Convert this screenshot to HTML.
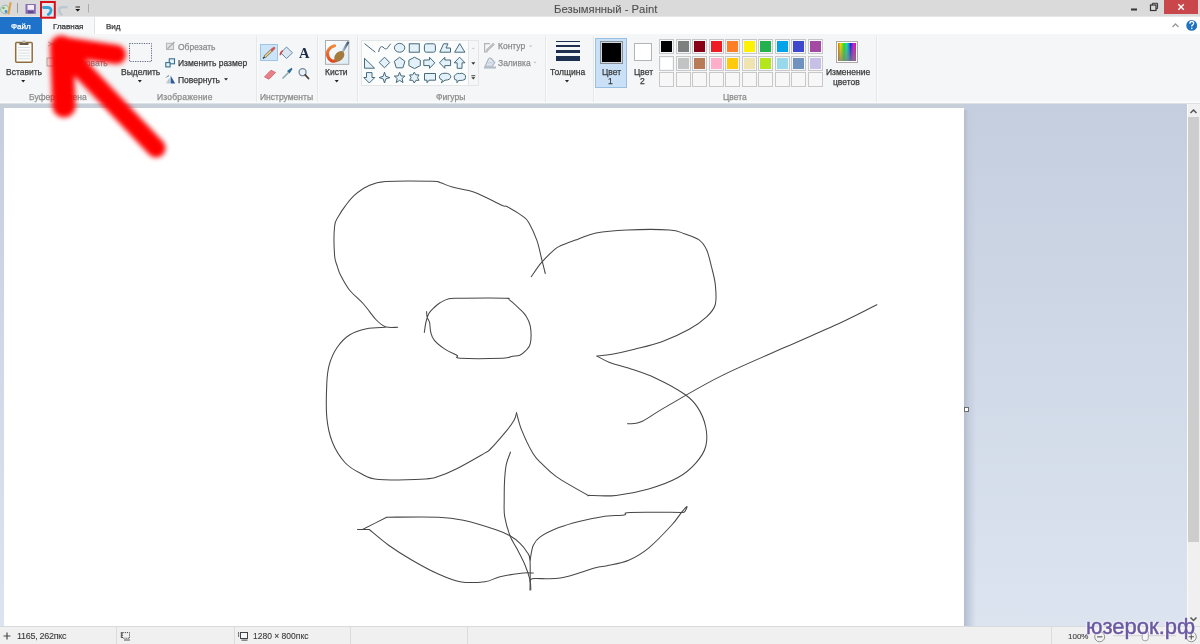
<!DOCTYPE html>
<html><head><meta charset="utf-8">
<style>
html,body{margin:0;padding:0;}
body{width:1200px;height:644px;overflow:hidden;position:relative;background:#fff;font-family:"Liberation Sans",sans-serif;}
.a{position:absolute;}
.t{position:absolute;white-space:nowrap;line-height:1;color:#3a3a3a;font-size:8.5px;-webkit-text-stroke:0.25px currentColor;will-change:transform;}
.g{color:#8c8c8c;}
.sep{position:absolute;top:36px;width:1px;height:66px;background:#e6e7e8;box-shadow:1px 0 0 #fbfbfb;}
.sw{position:absolute;width:13px;height:13px;border:1px solid #c8c8c8;}
.sw i{position:absolute;left:1px;top:1px;width:11px;height:11px;}
.sb{position:absolute;top:627px;width:1px;height:17px;background:#dcdcdc;}
</style></head><body>
<!-- title bar -->
<div class="a" style="left:0;top:0;width:1200px;height:16px;background:#dadada;"></div>
<div class="a" style="left:0;top:16px;width:1200px;height:1px;background:#e6e6e6;"></div>
<!-- tabs -->
<div class="a" style="left:0;top:17px;width:1200px;height:17px;background:#fff;"></div>
<div class="a" style="left:0;top:17px;width:42px;height:17px;background:#1f72c9;"></div>
<div class="a" style="left:42px;top:17px;width:52px;height:17px;background:#f7f8f9;border-right:1px solid #e2e3e4;"></div>
<!-- ribbon -->
<div class="a" style="left:0;top:34px;width:1200px;height:69px;background:#f5f6f7;"></div>
<div class="a" style="left:0;top:101px;width:1200px;height:2px;background:#f9fafa;"></div><div class="a" style="left:0;top:103px;width:1200px;height:1px;background:#dde2e8;"></div>
<!-- canvas area -->
<div class="a" style="left:0;top:104px;width:1187px;height:522px;background:linear-gradient(#c5cedf,#dce4f0);"></div>
<div class="a" style="left:0;top:104px;width:964px;height:4px;background:#c6ced8;"></div>
<div class="a" style="left:964px;top:110px;width:12px;height:516px;background:linear-gradient(90deg,#b3bdcc,#c4cddd 40%,rgba(0,0,0,0));"></div>
<div class="a" style="left:4px;top:108px;width:960px;height:518px;background:#fff;"></div>
<div class="a" style="left:964px;top:407px;width:3px;height:3px;border:1px solid #6d6d6d;background:#fff;"></div>
<!-- scrollbar -->
<div class="a" style="left:1187px;top:104px;width:13px;height:522px;background:#f0f0f0;border-left:1px solid #fafafa;box-sizing:border-box;"></div>
<div class="a" style="left:1188px;top:117px;width:11px;height:425px;background:#cdcdcd;"></div>
<!-- status bar -->
<div class="a" style="left:0;top:626px;width:1200px;height:18px;background:#f0f0f0;border-top:1px solid #dadada;box-sizing:border-box;"></div>
<div class="sb" style="left:116px"></div>
<div class="sb" style="left:234px"></div>
<div class="sb" style="left:350px"></div>
<div class="sb" style="left:467px"></div>
<div class="sb" style="left:1051px"></div>

<!-- title text -->
<div class="t" style="left:554px;top:4px;font-size:11.3px;color:#505050;-webkit-text-stroke:0.1px #505050;">Безымянный - Paint</div>
<!-- close -->
<div class="a" style="left:1164px;top:0;width:34px;height:14px;background:#c9464a;"></div>

<!-- tab text -->
<div class="t" style="left:11px;top:22.5px;font-size:8px;color:#fff;">Файл</div>
<div class="t" style="left:52.5px;top:22.5px;font-size:8px;">Главная</div>
<div class="t" style="left:105.5px;top:22.5px;font-size:8px;">Вид</div>

<!-- quick access toolbar -->
<svg class="a" style="left:0;top:0" width="100" height="20" viewBox="0 0 100 20">
  <circle cx="5" cy="9.5" r="4.3" fill="#cfe6d0" stroke="#8fa8b0" stroke-width="0.8"/>
  <circle cx="3.5" cy="8" r="1.1" fill="#5aa04a"/><circle cx="6" cy="11.5" r="1.4" fill="#4a90d0"/>
  <path d="M8.5,13.5 L10.5,3" stroke="#e0a050" stroke-width="2.2" stroke-linecap="round"/>
  <rect x="17" y="3" width="1" height="10" fill="#9a9a9a"/>
  <rect x="25.5" y="4" width="10.3" height="9.8" fill="#8a6cb4"/>
  <rect x="27.5" y="5" width="6.5" height="4.8" fill="#f4eefa"/>
  <rect x="28" y="11" width="5.5" height="2.2" fill="#5e4a86"/>
  <rect x="41" y="2" width="13.8" height="15.7" fill="#e4e8ec" stroke="#d3101c" stroke-width="2"/>
  <path d="M43.5,7.5 L48,7.5 Q51.3,7.8 51,10.8 Q50.6,13.2 48.3,14.5" fill="none" stroke="#35a2d8" stroke-width="2.8" stroke-linecap="round"/>
  <path d="M66.5,7.3 L61.7,7.3 Q59,7.6 59.2,10.5 Q59.5,13 61.5,14.6" fill="none" stroke="#bcc8d2" stroke-width="2.4" stroke-linecap="round"/>
  <rect x="75.5" y="6.5" width="4.5" height="1" fill="#222"/>
  <path d="M75.3,9 L80.2,9 L77.75,11.6 Z" fill="#111"/>
  <rect x="88" y="4" width="1" height="8.5" fill="#aaa"/>
</svg>
<!-- window controls -->
<svg class="a" style="left:1120px;top:0" width="80" height="34" viewBox="1120 0 80 34">
  <rect x="1131" y="8.5" width="6" height="2" fill="#333"/>
  <rect x="1150.5" y="5" width="5.5" height="5.5" fill="none" stroke="#333" stroke-width="1.2"/>
  <path d="M1152.3,5 L1152.3,3.3 L1157.6,3.3 L1157.6,8.6 L1156,8.6" fill="none" stroke="#333" stroke-width="1"/>
  <rect x="1164" y="0" width="34" height="14" fill="#c9474a"/>
  <path d="M1178.3,4.3 L1183.8,9.8 M1183.8,4.3 L1178.3,9.8" stroke="#fff" stroke-width="1.4"/>
  <path d="M1172.5,27 L1175.5,24 L1178.5,27" fill="none" stroke="#9a9a9a" stroke-width="1.3"/>
  <circle cx="1191.7" cy="25.4" r="5.4" fill="#1f73c0"/>
  <path d="M1189.8,23.6 Q1189.9,21.4 1191.8,21.4 Q1193.8,21.5 1193.7,23.3 Q1193.6,24.5 1192.4,25.1 Q1191.7,25.6 1191.7,26.6" fill="none" stroke="#fff" stroke-width="1.3"/>
  <rect x="1191" y="27.7" width="1.4" height="1.4" fill="#fff"/>
</svg>
<!-- clipboard -->
<svg class="a" style="left:0;top:34px" width="120" height="70" viewBox="0 34 120 70">
  <rect x="15.7" y="42.6" width="16.5" height="19.6" rx="1" fill="#fdfcf8" stroke="#8f6f40" stroke-width="1.5"/>
  <path d="M18,47.5 H30 M18,50.3 H30 M18,53.1 H30 M18,55.9 H30 M18,58.7 H30" stroke="#c9d9e6" stroke-width="0.8"/>
  <rect x="19.5" y="43" width="9" height="2" fill="#6a5a48"/>
  <rect x="22.5" y="40.5" width="3" height="2.5" fill="#b8b8b8"/>
  <path d="M21.2,80 L25.2,80 L23.2,82.4 Z" fill="#222"/>
  <!-- cut / copy (under arrow) -->
  <path d="M48,46 L56,42 M48,42 L56,46" stroke="#aaa" stroke-width="1"/>
  <rect x="47" y="58" width="7" height="8" fill="none" stroke="#aaa" stroke-width="1"/>
</svg>
<!-- image group -->
<svg class="a" style="left:110px;top:34px" width="150" height="70" viewBox="110 34 150 70">
  <rect x="129.5" y="43.5" width="22" height="18" fill="none" stroke="#5a6a80" stroke-width="1" stroke-dasharray="1.2,1.2"/>
  <path d="M137.8,80 L141.8,80 L139.8,82.4 Z" fill="#222"/>
  <!-- crop -->
  <rect x="166.5" y="43.3" width="7" height="6.2" fill="#e2e5e8" stroke="#b4b8bc" stroke-width="1.1"/>
  <path d="M167.5,48.8 L174.5,42" stroke="#a8acb0" stroke-width="1.2"/>
  <!-- resize -->
  <rect x="169.3" y="58.8" width="5.2" height="5" fill="#e6f1f8" stroke="#3a6e90" stroke-width="1.1"/>
  <rect x="165.8" y="62.6" width="4.3" height="4.3" fill="#e6f1f8" stroke="#3a6e90" stroke-width="1.1"/>
  <!-- rotate -->
  <defs><linearGradient id="rg" x1="0" y1="0" x2="1" y2="0"><stop offset="0" stop-color="#f4f4f4"/><stop offset="1" stop-color="#a8b4c0"/></linearGradient></defs>
  <path d="M170.6,75.5 L170.6,83.4 L175.2,83.4 Z" fill="#2f5f9a"/>
  <path d="M169.6,78 L169.6,83.4 L164.8,83.4 Z" fill="url(#rg)"/>
  <path d="M166.3,77.5 L167.5,76.2 M168.2,76.5 L168.4,75.3" stroke="#3a5a7a" stroke-width="0.9"/>
  <path d="M224,78.2 L228,78.2 L226,80.6 Z" fill="#222"/>
</svg>
<!-- tools -->
<svg class="a" style="left:255px;top:34px;will-change:transform" width="100" height="70" viewBox="255 34 100 70">
  <rect x="260.5" y="44.5" width="17" height="16" fill="#cce4f7" stroke="#a0c4e4" stroke-width="1"/>
  <path d="M264.5,57 L272.5,49.5" stroke="#7a6a4a" stroke-width="2.8"/>
  <path d="M264.5,57 L272.5,49.5" stroke="#ecd898" stroke-width="1.5"/>
  <path d="M272,50 L274,48.1" stroke="#d05858" stroke-width="2.6" stroke-linecap="round"/>
  <path d="M263,58.5 L264.8,56.7" stroke="#333" stroke-width="1.4"/>
  <!-- fill -->
  <path d="M286.5,47 L292.5,52.8 L286.5,58.5 L280.8,52.8 Z" fill="#dbe8f2" stroke="#5f8aa8" stroke-width="1"/>
  <path d="M283,50.8 Q280.5,51.5 280.3,55.3" fill="none" stroke="#d05050" stroke-width="1.6"/>
  <!-- A -->
  <text x="299" y="58.4" font-family="Liberation Serif" font-weight="bold" font-size="14.5" fill="#1e2b48">A</text>
  <!-- eraser -->
  <path d="M264.5,77 L271,70.2 L275.5,72.5 L269,79.2 Z" fill="#e88088" stroke="#d06068" stroke-width="0.8"/>
  <!-- picker -->
  <path d="M282.5,78.5 L288.5,72.5" stroke="#8aa0a8" stroke-width="1.4"/>
  <path d="M287,71 L291.5,67.8 L292.5,69 L289.5,73.5 Z" fill="#2a6f98"/>
  <!-- magnifier -->
  <circle cx="302.6" cy="72.2" r="3.5" fill="#e6f1f8" stroke="#7a8a98" stroke-width="1.3"/>
  <path d="M305.2,74.8 L308.5,78.5" stroke="#4a4038" stroke-width="1.8" stroke-linecap="round"/>
  <!-- brushes -->
  <defs><linearGradient id="bg1" x1="0" y1="0" x2="1" y2="1"><stop offset="0" stop-color="#fff"/><stop offset="1" stop-color="#dcecf6"/></linearGradient></defs>
  <rect x="325.5" y="40.5" width="23.3" height="23.8" fill="url(#bg1)" stroke="#a9adb0" stroke-width="1"/>
  <defs><linearGradient id="og" x1="0" y1="0" x2="0" y2="1"><stop offset="0" stop-color="#f08a40"/><stop offset="1" stop-color="#e04a20"/></linearGradient>
  <linearGradient id="hg" x1="0" y1="0" x2="1" y2="0"><stop offset="0" stop-color="#c8d8e8"/><stop offset="1" stop-color="#3a5070"/></linearGradient></defs>
  <path d="M334.5,45.8 Q329.5,47 327.6,52 Q326.8,57.5 331,60.5 Q334.5,62.3 338,59.5" fill="none" stroke="url(#og)" stroke-width="3.2" stroke-linecap="round"/>
  <path d="M341.5,53.5 L348.3,41.8" stroke="url(#hg)" stroke-width="2.4"/>
  <ellipse cx="339.3" cy="56.3" rx="6" ry="4.2" transform="rotate(-48 339.3 56.3)" fill="#a57a3e"/>
  <path d="M334.7,80 L338.7,80 L336.7,82.4 Z" fill="#222"/>
</svg>
<!-- shapes -->
<div class="a" style="left:361px;top:40px;width:108px;height:46px;background:#fbfcfc;border:1px solid #e3e5e7;box-sizing:border-box;"></div>
<div class="a" style="left:469px;top:40px;width:10px;height:46px;border:1px solid #e3e5e7;border-left:none;box-sizing:border-box;"></div>
<svg class="a" style="left:355px;top:34px" width="125" height="60" viewBox="355 34 125 60">
<g fill="#e3f2fa" stroke="#48697a" stroke-width="1" stroke-linejoin="miter">
  <path d="M364.5,43.6 L375.3,52.2" fill="none"/>
  <path d="M378.6,52 Q380,45 383,47 Q385.5,50.5 388,47.5 Q389.5,45 390.7,43.8" fill="none"/>
  <ellipse cx="399.6" cy="47.8" rx="5.2" ry="4.4"/>
  <rect x="409.3" y="43.8" width="10" height="8.4"/>
  <rect x="424.4" y="43.8" width="11" height="8.4" rx="2"/>
  <path d="M439.8,52.2 L443.6,43.8 L448,43.8 L446,48 L450.5,48 L450.5,52.2 Z"/>
  <path d="M454.6,52.2 L459.7,43.6 L464.9,52.2 Z"/>
  <path d="M364.5,58.3 L364.5,68.2 L374.6,68.2 Z"/>
  <path d="M384.5,57.2 L389.7,62.5 L384.5,67.8 L379.2,62.5 Z"/>
  <path d="M399.6,57.3 L404.9,61.3 L402.9,67.8 L396.3,67.8 L394.3,61.3 Z"/>
  <path d="M414.5,57.2 L420.3,60.2 L420.3,65.6 L414.5,68.6 L408.9,65.6 L408.9,60.2 Z"/>
  <path d="M423.8,60 L429.5,60 L429.5,57.3 L434.8,62.8 L429.5,68.3 L429.5,65.6 L423.8,65.6 Z"/>
  <path d="M450.6,60 L444.8,60 L444.8,57.3 L439.5,62.8 L444.8,68.3 L444.8,65.6 L450.6,65.6 Z"/>
  <path d="M457.2,68.3 L457.2,62.8 L454.2,62.8 L459.6,57.2 L465,62.8 L462,62.8 L462,68.3 Z"/>
  <path d="M366.5,72.6 L372,72.6 L372,77.5 L374.8,77.5 L369.3,83 L363.8,77.5 L366.5,77.5 Z"/>
  <path d="M384.5,72.2 L385.8,76.3 L389.9,77.6 L385.8,78.9 L384.5,83 L383.2,78.9 L379.1,77.6 L383.2,76.3 Z"/>
  <path d="M399.6,72.3 L401,75.9 L404.9,76.1 L402,78.6 L403,82.5 L399.6,80.4 L396.2,82.5 L397.2,78.6 L394.3,76.1 L398.2,75.9 Z"/>
  <path d="M414.3,72.2 L415.9,74.9 L419,74.9 L417.5,77.6 L419,80.3 L415.9,80.3 L414.3,83 L412.7,80.3 L409.6,80.3 L411.1,77.6 L409.6,74.9 L412.7,74.9 Z"/>
  <path d="M424.5,73.5 L435.5,73.5 L435.5,80.2 L429,80.2 L427,82.8 L427,80.2 L424.5,80.2 Z"/>
  <path d="M442.5,80.3 Q439,79 439.3,76.7 Q439.8,73.3 445,73.2 Q450.7,73.3 450.8,76.8 Q450.5,80 445,80.2 L441.3,82.8 Z"/>
  <path d="M457,80.3 Q453.8,79.8 454.3,77.8 Q453.5,75.5 455.8,74.5 Q457,72.8 459.6,73.6 Q462,72.5 463.8,74.2 Q466.3,75 465.5,77.3 Q466,80 462.5,80.3 L458.5,80.5 L457,82.8 Z"/>
</g>
  <path d="M471.8,49 L474.8,49 L473.3,47.4 Z" fill="#c8c8c8"/>
  <path d="M471.3,62.3 L475.3,62.3 L473.3,64.7 Z" fill="#333"/>
  <rect x="471.3" y="75.3" width="4" height="0.9" fill="#333"/>
  <path d="M471.3,77.2 L475.3,77.2 L473.3,79.6 Z" fill="#333"/>
</svg>
<!-- outline / fill -->
<svg class="a" style="left:478px;top:34px" width="70" height="40" viewBox="478 34 70 40">
  <path d="M490,43.6 H484.6 V51.8 H487.5" fill="none" stroke="#b4b4b4" stroke-width="1.2"/>
  <path d="M486.3,51 L494,43.6" stroke="#a9a9a9" stroke-width="2.2"/>
  <path d="M486.3,51 L494,43.6" stroke="#e8e8e8" stroke-width="0.7"/>
  <path d="M529.2,45.6 L532.4,45.6 L530.8,47.2 Z" fill="#c2c2c2"/>
  <path d="M485.2,66.3 L488.3,59.3 Q489.6,57 491.4,58.6 L494.8,62.6 L492.2,66.3 Z" fill="#dde4ec" stroke="#a6b2c0" stroke-width="1.1"/><path d="M488,63.5 Q490,61.8 492.5,63" fill="none" stroke="#b8c4d0" stroke-width="0.8"/>
  <rect x="484" y="66.4" width="12" height="2.2" fill="#b4bec8"/>
  <path d="M533.4,61.8 L536.6,61.8 L535,63.4 Z" fill="#c2c2c2"/>
</svg>
<!-- thickness -->
<div class="a" style="left:556px;top:41px;width:24px;height:1px;background:#1e3050;"></div>
<div class="a" style="left:556px;top:45px;width:24px;height:2px;background:#1e3050;"></div>
<div class="a" style="left:556px;top:50px;width:24px;height:3px;background:#1e3050;"></div>
<div class="a" style="left:556px;top:56px;width:24px;height:5px;background:#1e3050;"></div>
<svg class="a" style="left:560px;top:78px" width="14" height="8" viewBox="560 78 14 8"><path d="M565,80 L569,80 L567,82.4 Z" fill="#222"/></svg>
<!-- separators -->
<div class="sep" style="left:256px"></div>
<div class="sep" style="left:317px"></div>
<div class="sep" style="left:357px"></div>
<div class="sep" style="left:545px"></div>
<div class="sep" style="left:593px"></div>
<div class="sep" style="left:876px"></div>
<!-- color 1 / color 2 -->
<div class="a" style="left:595px;top:38px;width:32px;height:50px;background:#c9e0f7;border:1px solid #99bfe3;box-sizing:border-box;"></div>
<div class="a" style="left:600px;top:40.5px;width:23px;height:23px;background:#000;border:1px solid #8a9098;box-shadow:inset 0 0 0 1px #d0d6de;box-sizing:border-box;"></div>
<div class="a" style="left:634px;top:43px;width:18px;height:18px;background:#fff;border:1px solid #b4b4b4;box-sizing:border-box;"></div>
<!-- edit colors -->
<div class="a" style="left:836px;top:41px;width:22px;height:22px;border:1px solid #b0a8a8;box-sizing:border-box;background:#fff;"></div>
<div class="a" style="left:838px;top:43px;width:18px;height:18px;background:linear-gradient(rgba(128,128,128,0),rgba(128,128,128,0.75)),linear-gradient(90deg,#e07000,#f0e000 15%,#20e020 33%,#20e0a0 48%,#1080f0 62%,#2020c0 70%,#c020e0 85%,#e01080);"></div>
<!-- palette -->
<div class="sw" style="left:659.3px;top:39.4px;"><i style="background:#000000"></i></div>
<div class="sw" style="left:675.8px;top:39.4px;"><i style="background:#7f7f7f"></i></div>
<div class="sw" style="left:692.3px;top:39.4px;"><i style="background:#880015"></i></div>
<div class="sw" style="left:708.8px;top:39.4px;"><i style="background:#ed1c24"></i></div>
<div class="sw" style="left:725.3px;top:39.4px;"><i style="background:#ff7f27"></i></div>
<div class="sw" style="left:741.8px;top:39.4px;"><i style="background:#fff200"></i></div>
<div class="sw" style="left:758.3px;top:39.4px;"><i style="background:#22b14c"></i></div>
<div class="sw" style="left:774.8px;top:39.4px;"><i style="background:#00a2e8"></i></div>
<div class="sw" style="left:791.3px;top:39.4px;"><i style="background:#3f48cc"></i></div>
<div class="sw" style="left:807.8px;top:39.4px;"><i style="background:#a349a4"></i></div>
<div class="sw" style="left:659.3px;top:55.8px;"><i style="background:#ffffff"></i></div>
<div class="sw" style="left:675.8px;top:55.8px;"><i style="background:#c3c3c3"></i></div>
<div class="sw" style="left:692.3px;top:55.8px;"><i style="background:#b97a57"></i></div>
<div class="sw" style="left:708.8px;top:55.8px;"><i style="background:#ffaec9"></i></div>
<div class="sw" style="left:725.3px;top:55.8px;"><i style="background:#ffc90e"></i></div>
<div class="sw" style="left:741.8px;top:55.8px;"><i style="background:#efe4b0"></i></div>
<div class="sw" style="left:758.3px;top:55.8px;"><i style="background:#b5e61d"></i></div>
<div class="sw" style="left:774.8px;top:55.8px;"><i style="background:#99d9ea"></i></div>
<div class="sw" style="left:791.3px;top:55.8px;"><i style="background:#7092be"></i></div>
<div class="sw" style="left:807.8px;top:55.8px;"><i style="background:#c8bfe7"></i></div>
<div class="sw" style="left:659.3px;top:72.2px;background:#f7f7f7;"></div>
<div class="sw" style="left:675.8px;top:72.2px;background:#f7f7f7;"></div>
<div class="sw" style="left:692.3px;top:72.2px;background:#f7f7f7;"></div>
<div class="sw" style="left:708.8px;top:72.2px;background:#f7f7f7;"></div>
<div class="sw" style="left:725.3px;top:72.2px;background:#f7f7f7;"></div>
<div class="sw" style="left:741.8px;top:72.2px;background:#f7f7f7;"></div>
<div class="sw" style="left:758.3px;top:72.2px;background:#f7f7f7;"></div>
<div class="sw" style="left:774.8px;top:72.2px;background:#f7f7f7;"></div>
<div class="sw" style="left:791.3px;top:72.2px;background:#f7f7f7;"></div>
<div class="sw" style="left:807.8px;top:72.2px;background:#f7f7f7;"></div>
<!-- ribbon text -->
<div class="t" style="left:6px;top:68px;">Вставить</div>
<div class="t g" style="left:29px;top:93px;">Буфер обмена</div>
<div class="t g" style="left:62px;top:43px;">Вырезать</div>
<div class="t g" style="left:62px;top:59px;">Копировать</div>
<div class="t" style="left:121px;top:68px;">Выделить</div>
<div class="t g" style="left:178px;top:43px;">Обрезать</div>
<div class="t" style="left:178px;top:59px;">Изменить размер</div>
<div class="t" style="left:178px;top:76px;">Повернуть</div>
<div class="t g" style="left:157px;top:93px;letter-spacing:0.2px;">Изображение</div>
<div class="t g" style="left:260px;top:93px;">Инструменты</div>
<div class="t" style="left:325px;top:68px;">Кисти</div>
<div class="t g" style="left:436px;top:93px;">Фигуры</div>
<div class="t g" style="left:498px;top:42px;">Контур</div>
<div class="t g" style="left:498px;top:59px;">Заливка</div>
<div class="t" style="left:550px;top:68px;">Толщина</div>
<div class="t" style="left:602px;top:68px;">Цвет</div>
<div class="t" style="left:608px;top:77px;">1</div>
<div class="t" style="left:634px;top:68px;">Цвет</div>
<div class="t" style="left:640px;top:77px;">2</div>
<div class="t g" style="left:723px;top:93px;">Цвета</div>
<div class="t" style="left:826px;top:68px;">Изменение</div>
<div class="t" style="left:833px;top:78px;">цветов</div>


<!-- flower drawing -->
<svg class="a" style="left:0;top:0" width="1200" height="644" viewBox="0 0 1200 644">
<g fill="none" stroke="#474747" stroke-width="1.05" stroke-linejoin="round" stroke-linecap="round">
<path d="M397.7,327.3 C395.6,327.2 388.9,328.0 385.3,326.7 C381.7,325.4 379.5,323.3 375.9,319.5 C372.3,315.7 367.9,308.9 363.5,304.0 C359.1,299.1 353.3,294.8 349.5,290.0 C345.7,285.2 342.5,278.9 340.5,275.0 C338.5,271.1 338.4,269.8 337.4,266.6 C336.4,263.4 335.1,262.4 334.6,255.7 C334.1,249.0 333.9,232.9 334.6,226.2 C335.3,219.5 337.2,218.8 339.0,215.4 C340.8,212.1 342.6,209.5 345.2,206.1 C347.8,202.7 350.8,198.5 354.5,195.2 C358.2,191.9 362.5,188.5 367.7,186.2 C372.9,183.9 374.9,182.3 385.6,181.5 C396.3,180.7 422.9,181.0 432.1,181.2 C441.3,181.4 437.3,181.8 440.7,182.8 C444.1,183.8 446.6,185.5 452.3,187.1 C458.0,188.7 466.8,189.4 475.0,192.4 C483.2,195.4 496.4,202.8 501.8,205.2 C507.2,207.6 503.7,204.8 507.3,206.7 C510.9,208.6 520.0,214.1 523.6,216.8 C527.2,219.5 526.8,219.1 529.0,223.0 C531.2,226.9 534.7,234.3 536.8,240.1 C538.9,245.9 540.0,252.4 541.4,258.0 C542.8,263.6 544.6,270.9 545.3,273.5"/>
<path d="M531.3,276.6 C533.0,274.3 537.6,267.0 541.4,262.6 C545.2,258.2 550.8,252.9 553.9,250.2 C557.0,247.4 556.1,247.9 560.0,246.1 C563.9,244.3 571.4,241.6 577.4,239.4 C583.4,237.2 587.7,234.5 596.0,232.9 C604.3,231.3 614.9,230.4 627.1,229.9 C639.3,229.4 659.8,229.3 669.3,229.9 C678.8,230.5 679.2,232.0 684.2,233.7 C689.2,235.4 695.4,237.2 699.1,239.9 C702.8,242.6 704.5,245.2 706.6,249.8 C708.7,254.4 710.2,261.4 711.6,267.2 C713.0,273.0 714.7,278.4 715.3,284.6 C715.9,290.8 716.8,299.1 715.3,304.5 C713.8,309.9 711.0,312.8 706.6,316.9 C702.2,321.0 696.7,325.2 689.2,329.3 C681.8,333.4 671.0,338.4 661.9,341.7 C652.8,345.0 642.8,347.1 634.5,349.2 C626.2,351.3 618.5,353.0 612.2,354.2 C606.0,355.4 599.5,355.8 597.0,356.1"/>
<path d="M597.0,356.1 C599.1,357.2 604.2,360.4 609.6,362.4 C615.0,364.4 621.5,365.7 629.1,368.3 C636.7,370.9 646.0,373.7 655.2,378.0 C664.5,382.3 677.5,389.4 684.6,394.3 C691.7,399.2 694.1,401.9 697.6,407.4 C701.1,412.8 704.4,420.5 705.7,427.0 C707.1,433.5 707.3,440.5 705.7,446.5 C704.1,452.5 700.6,457.6 696.0,462.8 C691.4,468.0 685.9,473.1 678.0,477.5 C670.1,481.9 659.0,485.9 648.7,488.9 C638.4,491.9 625.9,494.3 616.1,495.4 C606.3,496.5 595.1,495.6 590.0,495.4 C584.9,495.2 591.3,497.1 585.7,494.0 C580.1,490.9 564.0,482.0 556.6,476.9 C549.2,471.8 545.3,467.2 541.3,463.2 C537.3,459.2 536.0,458.6 532.7,453.0 C529.4,447.4 524.3,436.6 521.6,429.9 C518.9,423.2 517.4,415.6 516.5,412.8"/>
<path d="M516.5,412.8 C516.1,414.1 516.0,416.9 513.9,420.5 C511.8,424.1 507.7,429.4 503.7,434.2 C499.7,439.0 493.2,446.4 490.0,449.5 C486.8,452.6 490.2,449.9 484.7,453.1 C479.1,456.3 464.5,464.8 456.7,468.7 C448.9,472.6 443.3,474.8 438.1,476.5 C432.9,478.2 435.6,478.4 425.7,478.9 C415.8,479.4 389.9,480.5 379.0,479.6 C368.1,478.7 366.1,476.2 360.4,473.3 C354.7,470.4 349.6,467.7 344.9,462.5 C340.2,457.3 335.4,449.8 332.4,442.3 C329.4,434.8 327.7,427.2 326.8,417.4 C325.9,407.5 326.4,392.0 326.8,383.2 C327.2,374.4 327.6,370.6 329.3,364.6 C331.0,358.7 333.7,352.4 337.1,347.5 C340.5,342.6 344.6,338.1 349.5,335.0 C354.4,331.9 360.6,330.1 366.6,328.8 C372.6,327.5 382.2,327.6 385.3,327.3"/>
<path d="M424.3,332.5 C424.6,330.7 425.3,324.7 426.1,321.5 C426.9,318.3 427.6,315.6 429.0,313.3 C430.4,311.0 432.4,309.2 434.2,307.5 C436.0,305.8 437.6,304.3 440.0,302.8 C442.4,301.3 445.2,299.5 448.8,298.7 C452.4,297.9 452.3,298.3 461.6,298.2 C470.9,298.1 496.7,297.9 504.7,298.2 C512.7,298.5 507.1,298.2 509.4,299.9 C511.7,301.5 516.0,305.5 518.7,308.1 C521.4,310.7 523.8,312.6 525.7,315.6 C527.6,318.6 529.5,321.4 530.3,326.1 C531.1,330.8 531.1,339.5 530.3,343.6 C529.5,347.7 527.5,348.7 525.7,350.6 C524.0,352.5 522.1,354.2 519.8,355.2 C517.5,356.2 514.6,355.9 511.7,356.4 C508.8,356.9 510.9,357.9 502.4,358.2 C493.8,358.5 468.0,358.7 460.4,358.2 C452.8,357.7 459.4,356.7 456.9,355.2 C454.4,353.7 449.1,351.9 445.3,349.4 C441.5,346.9 436.6,343.0 434.2,340.1 C431.8,337.2 431.5,334.9 430.7,332.0 C429.9,329.1 430.2,325.0 429.6,322.6 C429.0,320.2 427.7,319.2 427.2,317.4 C426.7,315.6 426.7,312.6 426.6,311.6"/>
<path d="M627.5,423.7 C629.7,423.4 634.2,424.8 640.5,422.1 C646.8,419.4 651.7,415.0 665.0,407.4 C678.3,399.8 700.3,386.4 720.4,376.4 C740.5,366.3 765.0,356.3 785.6,347.1 C806.2,337.9 829.1,328.1 844.3,321.0 C859.5,313.9 871.5,307.4 876.9,304.7"/>
<path d="M510.5,452.1 C509.8,454.2 507.2,459.9 506.2,464.9 C505.2,469.9 504.8,476.1 504.5,482.0 C504.2,487.9 504.2,494.2 504.2,500.0 C504.2,505.8 503.7,510.7 504.7,516.7 C505.7,522.7 508.0,530.5 510.0,535.8 C512.0,541.1 514.2,543.4 516.7,548.3 C519.2,553.2 522.8,559.7 525.0,565.0 C527.2,570.3 529.0,575.8 530.0,580.0 C531.0,584.2 530.7,588.3 530.8,590.0"/>
<path d="M357.5,529.5 C359.4,529.5 367.2,529.5 369.2,529.5"/>
<path d="M369.2,529.5 C372.4,532.1 381.2,539.9 388.3,545.0 C395.4,550.1 403.6,555.3 411.7,560.0 C419.8,564.7 428.6,569.7 436.7,573.3 C444.8,576.9 451.9,580.3 460.0,581.7 C468.1,583.1 478.3,582.5 485.0,581.7 C491.7,580.9 493.6,578.2 500.0,576.7 C506.4,575.2 517.8,573.6 523.3,573.0 C528.8,572.4 531.6,573.0 533.3,573.0"/>
<path d="M362.5,529.5 C366.5,527.5 382.7,519.2 386.7,517.2"/>
<path d="M386.7,517.2 C395.3,517.2 425.5,516.7 438.3,517.2 C451.1,517.7 453.6,518.2 463.3,520.3 C473.0,522.4 488.9,527.4 496.7,530.0 C504.5,532.6 506.1,533.6 510.0,535.8 C513.9,538.0 517.2,540.6 520.0,543.3 C522.8,545.9 525.0,548.9 526.7,551.7 C528.4,554.5 529.5,553.6 530.0,560.0 C530.5,566.4 530.0,585.0 530.0,590.0"/>
<path d="M530.0,581.0 C530.7,580.6 528.9,579.0 534.0,578.5 C539.1,578.0 550.3,579.9 560.4,578.1 C570.5,576.4 586.7,570.1 594.5,568.0 C602.3,565.9 601.3,567.0 607.0,565.7 C612.7,564.4 621.7,563.2 628.7,560.2 C635.7,557.2 641.6,553.8 648.9,547.8 C656.1,541.8 666.8,530.4 672.2,524.5 C677.6,518.6 679.0,515.4 681.5,512.4 C684.0,509.4 686.5,506.7 687.0,506.6 C687.5,506.5 685.5,510.8 684.6,511.8 C683.7,512.8 682.0,512.3 681.5,512.4"/>
<path d="M681.5,512.4 C673.0,512.4 639.8,512.0 630.2,512.4 C620.6,512.8 628.6,514.2 624.0,514.9 C619.4,515.6 609.8,515.6 602.3,516.7 C594.8,517.8 586.2,519.6 579.0,521.4 C571.8,523.2 565.3,525.0 558.8,527.6 C552.3,530.2 544.5,533.9 540.2,536.9 C535.9,539.9 534.9,541.6 533.2,545.5 C531.5,549.4 530.6,557.8 530.1,560.2"/>
</g>
</svg>
<!-- status text -->
<div class="t" style="left:17px;top:632px;font-size:9px;letter-spacing:-0.3px;-webkit-text-stroke:0.1px #3a3a3a;">1165, 262пкс</div>
<div class="t" style="left:252.5px;top:632px;font-size:8.5px;-webkit-text-stroke:0.1px #3a3a3a;">1280 × 800пкс</div>
<div class="t" style="left:1068px;top:632.5px;font-size:8px;-webkit-text-stroke:0.1px #3a3a3a;">100%</div>


<!-- scrollbar arrows -->
<svg class="a" style="left:1187px;top:104px" width="13" height="522" viewBox="1187 104 13 522">
  <path d="M1190.5,113 L1193.5,110 L1196.5,113" fill="none" stroke="#555" stroke-width="1.5"/>
  <path d="M1190.5,617.5 L1193.5,620.5 L1196.5,617.5" fill="none" stroke="#555" stroke-width="1.5"/>
</svg>
<!-- status icons -->
<svg class="a" style="left:0;top:626px" width="1200" height="18" viewBox="0 626 1200 18">
  <path d="M3.5,636 H10.5 M7,632.5 V639.5" stroke="#4a4a4a" stroke-width="1.2"/>
  <rect x="122.5" y="632.6" width="7" height="5.6" fill="none" stroke="#333" stroke-width="0.9" stroke-dasharray="1.2,1"/>
  <rect x="120.8" y="632" width="1.2" height="6" fill="#666"/>
  <rect x="124" y="639.5" width="6" height="1" fill="#555"/>
  <rect x="240.5" y="632.5" width="7" height="6" fill="#f4f8fb" stroke="#444" stroke-width="1"/>
  <rect x="238" y="632" width="1.1" height="5" fill="#777"/>
  <rect x="241.5" y="639.6" width="6" height="1" fill="#444"/>
  <circle cx="1099.7" cy="636.8" r="5" fill="#f3f3f3" stroke="#8d8d8d" stroke-width="1"/>
  <rect x="1097" y="636.3" width="5.4" height="1.1" fill="#555"/>
  <rect x="1113" y="635.2" width="63" height="1" fill="#d0d0d0"/>
  <path d="M1142.2,631.8 H1148.3 V638.5 Q1148.3,640.8 1145.2,640.8 Q1142.2,640.8 1142.2,638.5 Z" fill="#f8f8f8" stroke="#9a9a9a" stroke-width="0.9"/>
  <circle cx="1191.3" cy="636.8" r="5" fill="#f3f3f3" stroke="#8d8d8d" stroke-width="1"/>
  <path d="M1188.6,636.8 H1194 M1191.3,634.1 V639.5" stroke="#555" stroke-width="1.1"/>
</svg>
<!-- watermark -->
<div class="a" style="left:1085.5px;top:615.5px;font-family:'Liberation Sans',sans-serif;font-size:22px;line-height:1;color:#6a58a2;white-space:nowrap;-webkit-text-stroke:0.45px #6a58a2;text-shadow:0 0 2px #fff,0 0 3px #fff;will-change:transform;">юзерок.рф</div>
<!-- red arrow -->
<svg class="a" style="left:0;top:0" width="300" height="200" viewBox="0 0 300 200">
<defs><filter id="bl" x="-30%" y="-30%" width="160%" height="160%"><feGaussianBlur stdDeviation="2.8"/></filter></defs>
<g filter="url(#bl)" fill="none" stroke="#ff0000" stroke-linecap="round" stroke-linejoin="round">
<path d="M61.5,47 L64,106" stroke-width="23"/>
<path d="M60,46 L116.5,54.5" stroke-width="19"/>
<path d="M60,47 L156,148" stroke-width="19"/>
</g>
</svg>
</body></html>
